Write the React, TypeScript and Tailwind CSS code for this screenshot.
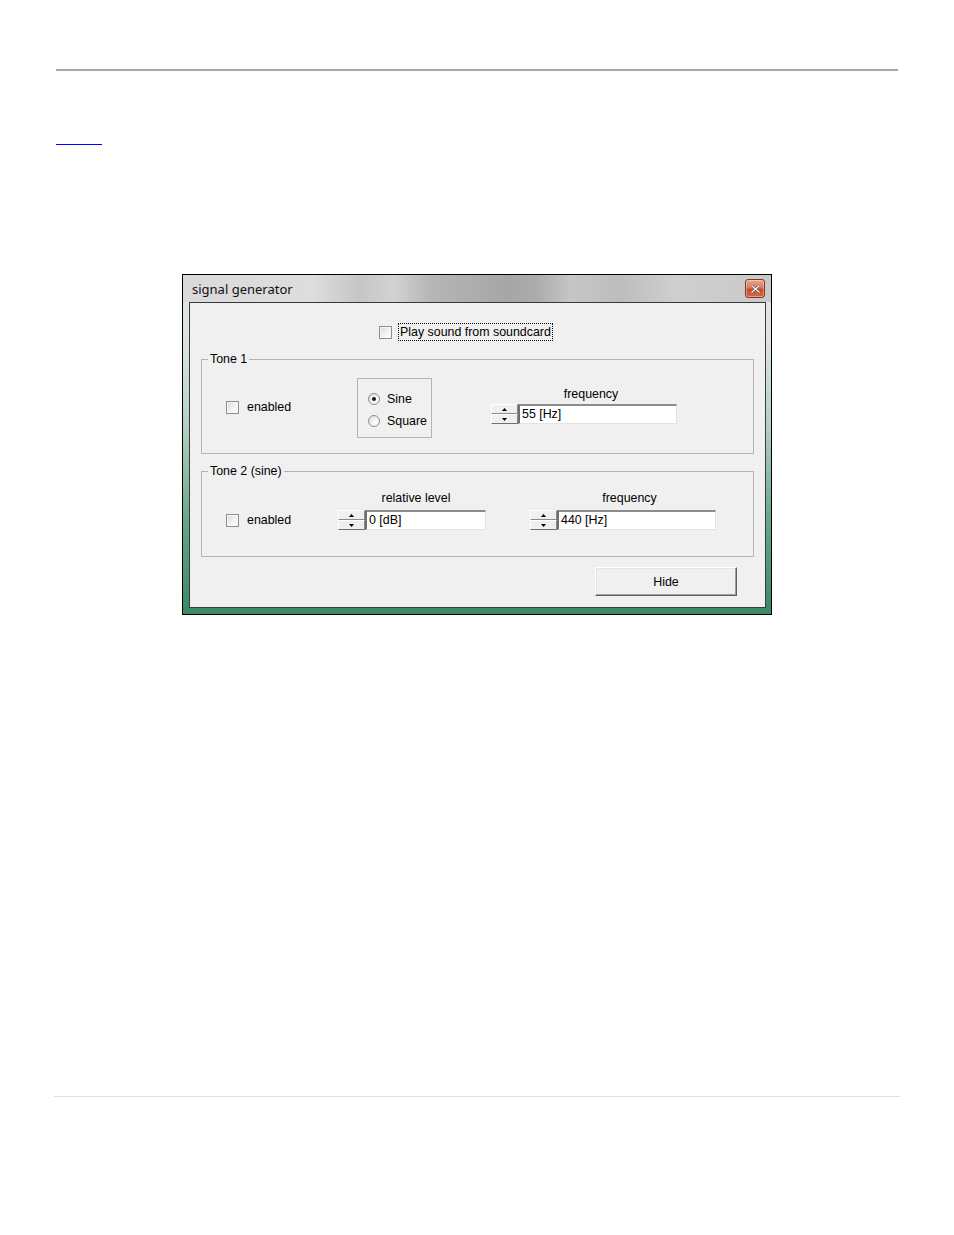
import React from "react";

function Check() {
  return (
    <span className="block w-[13px] h-[13px] shrink-0 border border-[#8e8f8f] bg-[linear-gradient(135deg,#d9d9d9_0%,#f3f3f3_55%,#ffffff_100%)] shadow-[inset_0_0_0_1px_#f7f7f7]" />
  );
}

function Radio({ on }: { on?: boolean }) {
  return (
    <span className="flex w-[12px] h-[12px] shrink-0 items-center justify-center rounded-full border border-[#8e8f8f] bg-[radial-gradient(circle_at_65%_65%,#ffffff_0%,#f1f1f1_45%,#d2d2d2_100%)]">
      {on && <span className="block w-[4px] h-[4px] rounded-full bg-[#1b1b1b]" />}
    </span>
  );
}

function Arrow({ up }: { up?: boolean }) {
  return (
    <svg width="5" height="3" viewBox="0 0 5 3">
      <polygon points={up ? "2.5,0 5,3 0,3" : "0,0 5,0 2.5,3"} fill="#000" />
    </svg>
  );
}

function Spin() {
  return (
    <div className="flex flex-col w-[27px] h-[20px] shrink-0">
      <div className="flex h-[10px] items-center justify-center bg-[#efefef] border-t border-l border-t-white border-l-white border-b border-r border-b-[#8a8a8a] border-r-[#8a8a8a]">
        <Arrow up />
      </div>
      <div className="flex h-[10px] items-center justify-center bg-[#efefef] border-t border-l border-t-white border-l-white border-b border-r border-b-[#6f6f6f] border-r-[#8a8a8a]">
        <Arrow />
      </div>
    </div>
  );
}

function Edit({ w, value }: { w: string; value: string }) {
  return (
    <div
      className={`${w} h-[20px] bg-white border-t-2 border-l-2 border-t-[#8c8c8c] border-l-[#6f6f6f] border-r border-b border-r-[#e3e3e3] border-b-[#e3e3e3] pl-[2px] text-[12.4px] leading-[16px] text-black`}
    >
      {value}
    </div>
  );
}

function SpinEdit({ w, value }: { w: string; value: string }) {
  return (
    <div className="flex items-start">
      <Spin />
      <Edit w={w} value={value} />
    </div>
  );
}

function Enabled() {
  return (
    <div className="flex items-center gap-[8px] h-[14px]">
      <Check />
      <span className="text-[12.4px] leading-[14px]">enabled</span>
    </div>
  );
}

function Group({ title, children }: { title: string; children: React.ReactNode }) {
  return (
    <fieldset className="ml-[11px] w-[553px] border border-[#b4b4b4]">
      <legend className="ml-[6px] px-[2px] text-[12.4px] leading-[14px] text-black">{title}</legend>
      {children}
    </fieldset>
  );
}

function CloseButton() {
  return (
    <div className="flex w-[20px] h-[19px] items-center justify-center rounded-[3px] border border-[#7a3b2a] bg-[linear-gradient(180deg,#eba58f_0%,#de7a5e_45%,#c94a2c_55%,#d9694a_100%)] shadow-[inset_0_0_0_1px_rgba(255,255,255,0.35)]">
      <svg width="9" height="8" viewBox="0 0 9 8">
        <path d="M1 1 L8 7 M8 1 L1 7" stroke="#6b5852" strokeWidth="2.6" strokeLinecap="square" />
        <path d="M1 1 L8 7 M8 1 L1 7" stroke="#f2f2f2" strokeWidth="1.3" strokeLinecap="square" />
      </svg>
    </div>
  );
}

export default function App() {
  return (
    <div className="w-[954px] h-[1235px] overflow-hidden bg-white pt-[69px] font-['Liberation_Sans',Arial,sans-serif] text-black">
      {/* page header rule */}
      <div className="ml-[56px] w-[842px] h-[2px] bg-[#a6a6a6]" />

      {/* empty link underline */}
      <div className="mt-[73px] ml-[56px] w-[46px] h-[1px] bg-[#0000ff]" />

      {/* dialog window */}
      <div className="mt-[129px] ml-[182px] w-[590px] h-[341px] border border-black bg-[linear-gradient(180deg,#e4e8e6_0%,#dbe3df_20%,#b3d0c1_45%,#68a888_72%,#3a8964_100%)]">
        <div className="flex h-[27px] items-start justify-between pl-[9px] pr-[6px] bg-[linear-gradient(90deg,#dadada_0%,#dddddd_22%,#c6c6c6_30%,#d2d2d2_36%,#b6b6b6_42%,#a6a6a6_55%,#ababab_60%,#c6c6c6_66%,#bdbdbd_74%,#cfcfcf_84%,#c9c9c9_100%)]">
          <span className="pt-[6px] font-['Noto_Sans',sans-serif] text-[13px] leading-[16px] text-[#111]">signal generator</span>
          <div className="pt-[4px]">
            <CloseButton />
          </div>
        </div>

        <div className="mx-[6px] w-[577px] h-[306px] border border-[#3a3a3a] bg-[#f0f0f0] pt-[20px]">
          {/* play sound row */}
          <div className="ml-[189px] flex h-[18px] items-center">
            <Check />
            <span className="ml-[6px] border border-dotted border-black px-[1px] text-[12.4px] leading-[16px]">
              Play sound from soundcard
            </span>
          </div>

          <div className="mt-[11px]">
            <Group title="Tone 1">
              <div className="flex h-[87px] items-start pl-[24px]">
                <div className="mt-[34px] w-[131px]">
                  <Enabled />
                </div>
                <div className="mt-[12px] flex h-[60px] w-[75px] flex-col gap-[8px] border border-[#b4b4b4] pt-[13px] pl-[10px]">
                  <div className="flex h-[14px] items-center gap-[7px]">
                    <Radio on />
                    <span className="text-[12.4px] leading-[14px]">Sine</span>
                  </div>
                  <div className="flex h-[14px] items-center gap-[7px]">
                    <Radio />
                    <span className="text-[12.4px] leading-[14px]">Square</span>
                  </div>
                </div>
                <div className="ml-[59px] mt-[21px] w-[186px]">
                  <div className="pl-[14px] text-center text-[12.4px] leading-[14px]">frequency</div>
                  <div className="mt-[3px]">
                    <SpinEdit w="w-[159px]" value="55 [Hz]" />
                  </div>
                </div>
              </div>
            </Group>
          </div>

          <div className="mt-[10px]">
            <Group title="Tone 2 (sine)">
              <div className="flex h-[78px] items-start pl-[24px]">
                <div className="mt-[35px] w-[112px]">
                  <Enabled />
                </div>
                <div className="mt-[13px] w-[148px]">
                  <div className="pl-[8px] text-center text-[12.4px] leading-[14px]">relative level</div>
                  <div className="mt-[5px]">
                    <SpinEdit w="w-[121px]" value="0 [dB]" />
                  </div>
                </div>
                <div className="ml-[44px] mt-[13px] w-[186px]">
                  <div className="pl-[13px] text-center text-[12.4px] leading-[14px]">frequency</div>
                  <div className="mt-[5px]">
                    <SpinEdit w="w-[159px]" value="440 [Hz]" />
                  </div>
                </div>
              </div>
            </Group>
          </div>

          <div className="mt-[10px] flex justify-end pr-[28px]">
            <button className="flex h-[29px] w-[142px] items-center justify-center border border-t-white border-l-white border-r-[#5f5f5f] border-b-[#5f5f5f] bg-[#f0f0f0] text-[12.4px] leading-[14px] shadow-[inset_-1px_-1px_0_#a0a0a0,inset_1px_1px_0_#e3e3e3]">
              Hide
            </button>
          </div>
        </div>
      </div>

      {/* page footer rule */}
      <div className="mt-[481px] ml-[54px] w-[846px] h-[1px] bg-[#dedede]" />
    </div>
  );
}
